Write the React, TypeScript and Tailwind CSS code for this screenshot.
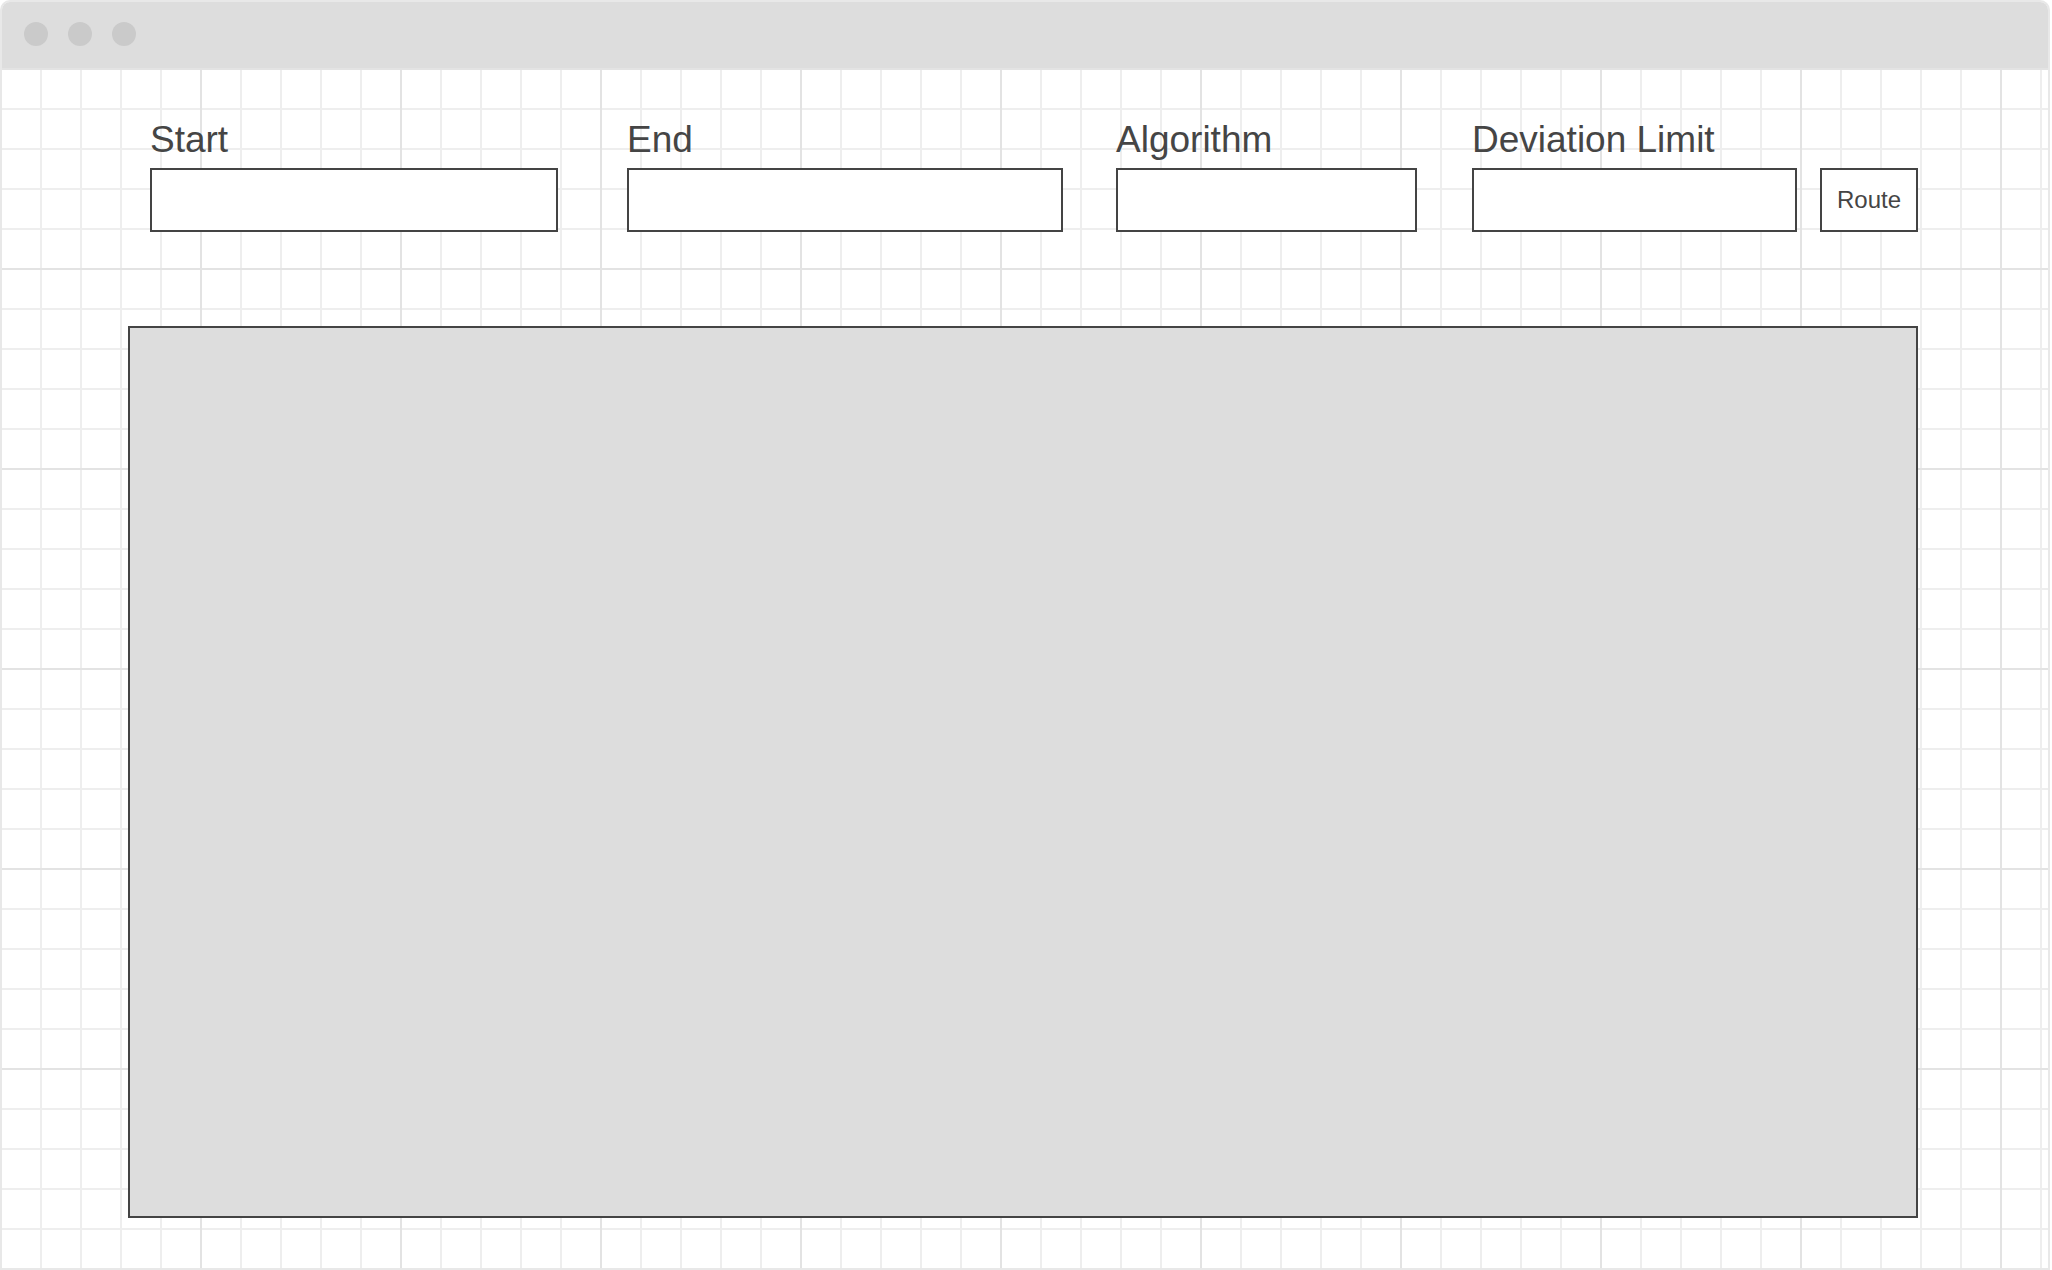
import React from "react";

const font = { fontFamily: '"Liberation Sans", Arial, sans-serif' };

function Field({ label, width, ml }: { label: string; width: string; ml: string }) {
  return (
    <div className={`flex flex-col ${width} ${ml}`}>
      <div className="h-[40px] text-[37px] leading-[40px] text-[#454545] whitespace-nowrap mb-[8px]">{label}</div>
      <div className="h-[64px] border-2 border-[#444444] bg-white" />
    </div>
  );
}

export default function App() {
  return (
    <div className="w-[2052px] h-[1270px] bg-white" style={font}>
      <div className="w-[2050px] h-[1270px] border-2 border-[#e8e8e8] rounded-t-[10px] overflow-hidden flex flex-col">
        <div className="h-[66px] shrink-0 bg-[#dddddd] flex items-center pl-[22px] pb-[2px] gap-[20px]">
          <div className="w-[24px] h-[24px] rounded-full bg-[#cacaca]" />
          <div className="w-[24px] h-[24px] rounded-full bg-[#cacaca]" />
          <div className="w-[24px] h-[24px] rounded-full bg-[#cacaca]" />
        </div>
        <div className="flex-1 flex flex-col bg-white bg-[image:linear-gradient(to_right,#e3e3e3_2px,transparent_2px),linear-gradient(to_bottom,#e3e3e3_2px,transparent_2px),linear-gradient(to_right,#eeeeee_2px,transparent_2px),linear-gradient(to_bottom,#eeeeee_2px,transparent_2px)] bg-[size:200px_200px,200px_200px,40px_40px,40px_40px] bg-[position:-2px_0,-2px_0,-2px_0,-2px_0]">
          <div className="flex items-end pt-[52px] pl-[148px]">
            <Field label="Start" width="w-[408px]" ml="ml-0" />
            <Field label="End" width="w-[436px]" ml="ml-[69px]" />
            <Field label="Algorithm" width="w-[301px]" ml="ml-[53px]" />
            <Field label="Deviation Limit" width="w-[325px]" ml="ml-[55px]" />
            <button className="ml-[23px] w-[98px] h-[64px] border-2 border-[#444444] bg-white text-[24px] text-[#454545] flex items-center justify-center">
              Route
            </button>
          </div>
          <div className="ml-[126px] mt-[94px] w-[1790px] h-[892px] border-2 border-[#444444] bg-[#dddddd]" />
        </div>
      </div>
    </div>
  );
}
